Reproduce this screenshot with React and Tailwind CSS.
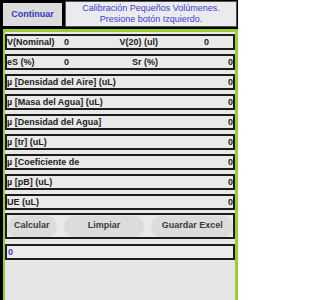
import React from "react";

const font = { fontFamily: '"Liberation Sans", Arial, sans-serif' };

function Row({ label, value = "0" }) {
  return (
    <div className="h-[16px] border-2 border-[#1c1c1c] bg-[#e9e9e9] flex items-center justify-between text-[9px] font-bold text-[#222] leading-none">
      <span>{label}</span>
      <span>{value}</span>
    </div>
  );
}

export default function App() {
  return (
    <div className="w-[238px] h-[300px] bg-black flex flex-col overflow-hidden" style={font}>
      <div className="h-[29px] flex pl-[3px] pt-[1px] pr-[1px] pb-[2px] gap-[2px]">
        <div className="mt-[2px] mb-[1px] w-[59px] bg-[#dcdcdc] flex items-center justify-center text-[9px] font-bold text-[#3535c8]">
          Continuar
        </div>
        <div className="flex-1 ml-[1px] bg-[#ebebee] border border-[#555] flex flex-col items-center justify-center text-[9px] leading-[11px] text-[#3b3bd6]">
          <span>Calibración Pequeños Volúmenes.</span>
          <span>Presione botón Izquierdo.</span>
        </div>
      </div>
      <div className="flex-1 ml-[3px] border-t-[3px] border-l-2 border-r-[3px] border-[#9acd32] bg-[#e8e8e8] flex flex-col pt-[2px]">
        <div className="flex flex-col gap-[4px]">
          <div className="h-[16px] border-2 border-[#1c1c1c] bg-[#e9e9e9] flex items-center text-[9px] font-bold text-[#222] leading-none">
            <span className="w-[57px]">V(Nominal)</span>
            <span className="w-[47px]">0</span>
            <span className="w-[47px] text-right">V(20) (ul)</span>
            <span className="pl-[46px]">0</span>
          </div>
          <div className="h-[16px] border-2 border-[#1c1c1c] bg-[#e9e9e9] flex items-center text-[9px] font-bold text-[#222] leading-none">
            <span className="w-[57px]">eS (%)</span>
            <span className="w-[47px]">0</span>
            <span className="w-[47px] text-right">Sr (%)</span>
            <span className="flex-1 text-right">0</span>
          </div>
          <Row label="µ [Densidad del Aire] (uL)" />
          <Row label="µ [Masa del Agua] (uL)" />
          <Row label="µ [Densidad del Agua]" />
          <Row label="µ [tr] (uL)" />
          <Row label="µ [Coeficiente de" />
          <Row label="µ [pB] (uL)" />
          <Row label="UE (uL)" />
        </div>
        <div className="mt-[3px] h-[26px] border-2 border-[#1c1c1c] bg-[#e9e9e9] flex items-center gap-[7px] text-[9px] font-bold text-[#3a3a3a]">
          <div className="w-[50px] h-[21px] rounded-[10px] bg-[#dcdcdc] flex items-center justify-center">Calcular</div>
          <div className="w-[81px] h-[21px] rounded-[10px] bg-[#dcdcdc] flex items-center justify-center">Limpiar</div>
          <div className="w-[82px] h-[21px] rounded-[10px] bg-[#dcdcdc] flex items-center justify-center">Guardar Excel</div>
        </div>
        <div className="mt-[5px] h-[16px] border-2 border-[#1c1c1c] bg-[#ececec] flex items-center pl-[1px] text-[9px] font-bold text-[#3b3bd6] leading-none">
          0
        </div>
        <div className="flex-1 bg-[#e6e6e6]"></div>
      </div>
    </div>
  );
}
